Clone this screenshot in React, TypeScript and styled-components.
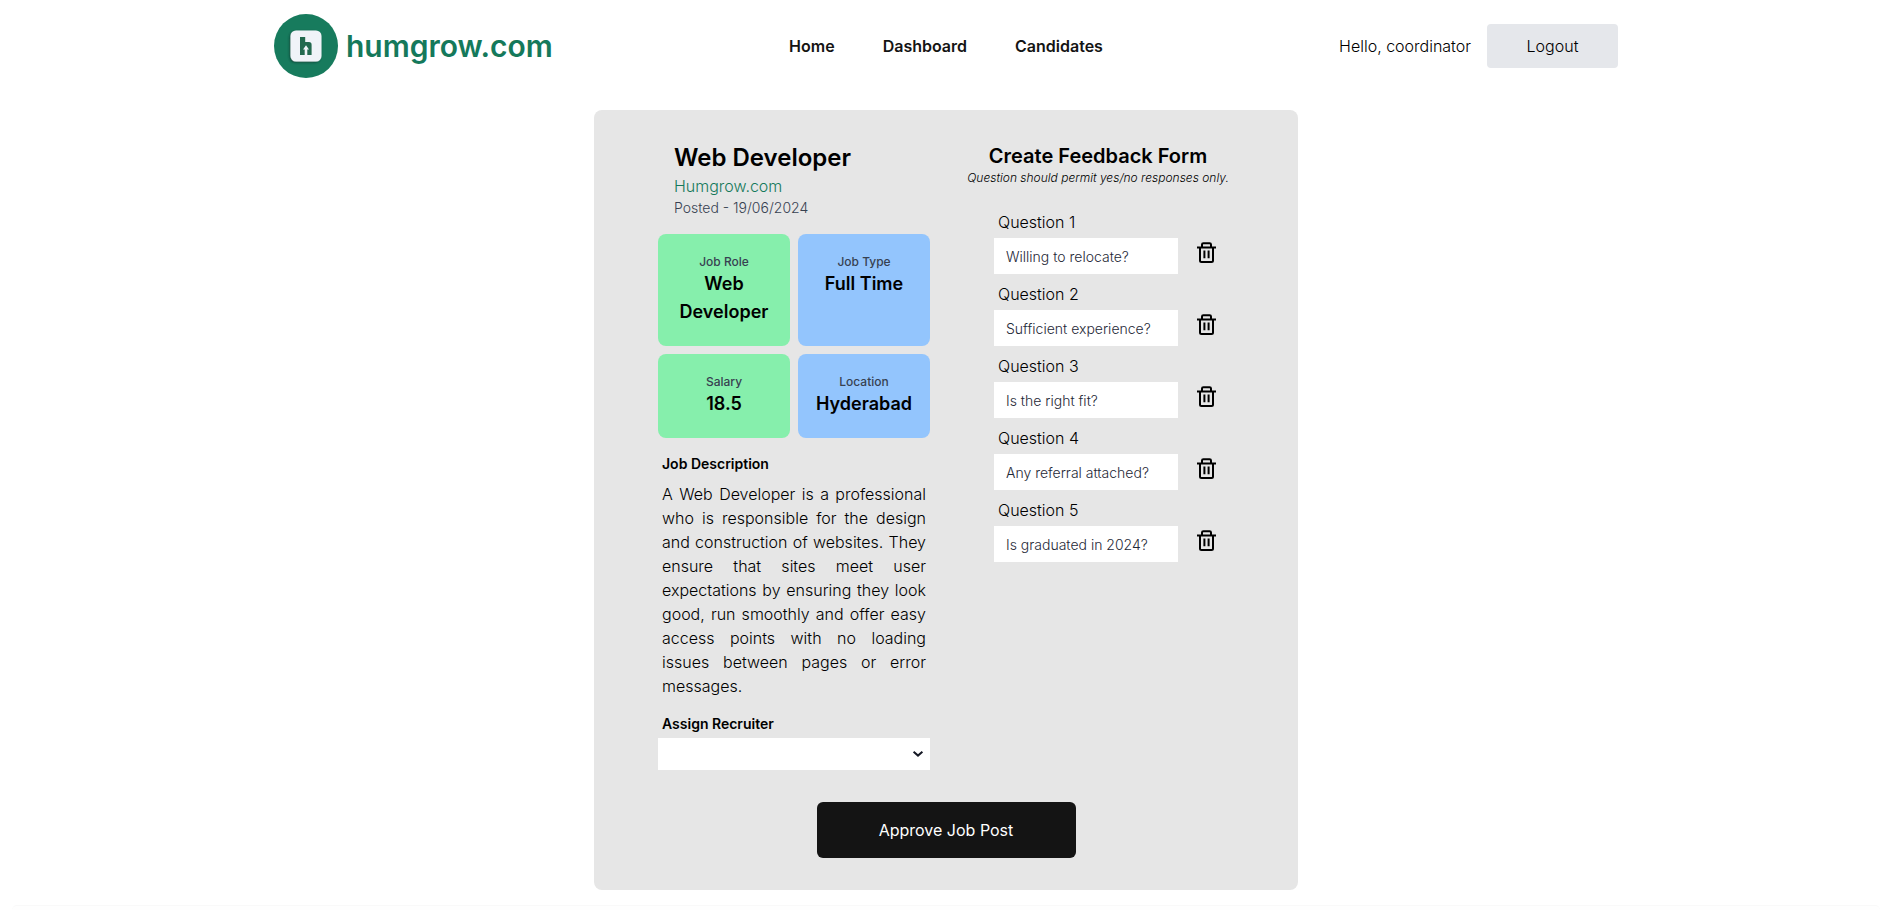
import React, { useState } from 'react';
import styled, { createGlobalStyle } from 'styled-components';

const GlobalStyle = createGlobalStyle`
  *, *::before, *::after {
    box-sizing: border-box;
  }
  body {
    margin: 0;
    background: #ffffff;
    color: #000000;
    font-family: Inter, 'Liberation Sans', sans-serif;
    font-size: 16px;
    font-weight: 300;
    line-height: 24px;
  }
  h1, h2, h3, p, dl, dt, dd {
    margin: 0;
  }
  button, input, select {
    font: inherit;
    color: inherit;
  }
`;

const Page = styled.div`
  padding-left: 6px;
`;

const Header = styled.header`
  display: grid;
  grid-template-columns: 1fr auto 1fr;
  align-items: center;
  max-width: 1344px;
  margin: 0 auto;
  padding: 14px 0;
`;

const Brand = styled.a`
  display: flex;
  align-items: center;
  gap: 8px;
  color: #15795b;
  font-size: 30px;
  font-weight: 600;
  line-height: 36px;
  text-decoration: none;
`;

const Nav = styled.nav`
  display: flex;
  gap: 48px;
`;

const NavLink = styled.a`
  color: #141414;
  font-weight: 600;
  text-decoration: none;
`;

const Account = styled.div`
  display: flex;
  align-items: center;
  justify-content: flex-end;
  gap: 16px;
`;

const LogoutButton = styled.button`
  min-width: 131px;
  padding: 10px 32px;
  border: 0;
  border-radius: 4px;
  background: #e5e7eb;
  cursor: pointer;
`;

const Card = styled.main`
  display: flex;
  flex-direction: column;
  gap: 32px;
  max-width: 704px;
  margin: 18px auto 0;
  padding: 32px 64px;
  border-radius: 8px;
  background: #e6e6e6;
`;

const Columns = styled.div`
  display: grid;
  grid-template-columns: repeat(2, minmax(0, 1fr));
  gap: 32px;
`;

const JobHeading = styled.div`
  padding: 0 16px;
`;

const JobTitle = styled.h1`
  font-size: 24px;
  font-weight: 600;
  line-height: 32px;
`;

const Company = styled.p`
  color: #15795b;
`;

const Posted = styled.p`
  color: #374151;
  font-size: 14px;
  line-height: 20px;
`;

const Facts = styled.dl`
  display: grid;
  grid-template-columns: repeat(2, minmax(0, 1fr));
  gap: 8px;
  margin: 16px 0;
`;

const Fact = styled.div<{ $tone: 'green' | 'blue' }>`
  padding: 20px 16px;
  border-radius: 8px;
  background: ${({ $tone }) => ($tone === 'green' ? '#86efac' : '#93c5fd')};
  text-align: center;
`;

const FactName = styled.dt`
  color: #374151;
  font-size: 12px;
  font-weight: 500;
  line-height: 16px;
`;

const FactValue = styled.dd`
  font-size: 18px;
  font-weight: 600;
  line-height: 28px;
`;

const SectionTitle = styled.h3`
  padding: 0 4px;
  font-size: 14px;
  font-weight: 600;
  line-height: 20px;
`;

const Description = styled.p`
  margin: 8px 0 16px;
  padding: 0 4px;
  text-align: justify;
`;

const RecruiterLabel = styled.label`
  display: block;
  margin-bottom: 4px;
  padding: 0 4px;
  font-size: 14px;
  font-weight: 600;
  line-height: 20px;
`;

const SelectBox = styled.div`
  position: relative;
`;

const Select = styled.select`
  display: block;
  width: 100%;
  height: 32px;
  padding: 0 32px 0 12px;
  border: 0;
  border-radius: 0;
  background: #ffffff;
  appearance: none;
`;

const SelectArrow = styled.svg`
  position: absolute;
  top: 12px;
  right: 6px;
  pointer-events: none;
`;

const FormHeading = styled.div`
  text-align: center;
`;

const FormTitle = styled.h2`
  font-size: 20px;
  font-weight: 600;
  line-height: 28px;
`;

const FormNote = styled.p`
  font-size: 12px;
  font-style: italic;
  line-height: 16px;
`;

const Questions = styled.div`
  display: flex;
  flex-direction: column;
  gap: 8px;
  margin-top: 24px;
  padding: 0 16px 0 32px;
`;

const QuestionLabel = styled.label`
  display: block;
  margin-bottom: 4px;
  padding: 0 4px;
`;

const QuestionRow = styled.div`
  display: flex;
  align-items: flex-start;
  gap: 16px;
`;

const QuestionInput = styled.input`
  flex: 1;
  min-width: 0;
  height: 36px;
  padding: 0 12px;
  border: 0;
  background: #ffffff;
  color: #1f2937;
  font-size: 14px;
`;

const DeleteButton = styled.button`
  display: flex;
  justify-content: center;
  width: 24px;
  padding: 4px 0;
  border: 0;
  background: none;
  cursor: pointer;
`;

const ApproveButton = styled.button`
  align-self: center;
  min-width: 259px;
  padding: 16px 56px;
  border: 0;
  border-radius: 6px;
  background: #141414;
  color: #ffffff;
  font-weight: 400;
  cursor: pointer;
`;

const FooterPanel = styled.footer`
  height: 5px;
  margin: 15px 6px 0;
  border-top: 1px solid #f9f9f9;
  border-radius: 8px 8px 0 0;
  background: #fefefe;
`;

const Logo = () => (
  <svg width="64" height="64" viewBox="0 0 64 64" aria-hidden="true">
    <defs>
      <filter id="tile-shadow" x="-30%" y="-30%" width="160%" height="160%">
        <feDropShadow dx="-1" dy="1" stdDeviation="1" floodColor="#0a3527" floodOpacity="0.7" />
      </filter>
    </defs>
    <circle cx="32" cy="32" r="32" fill="#177b5d" />
    <rect x="16.5" y="16.5" width="31" height="31" rx="5.5" fill="#f0f3f8" filter="url(#tile-shadow)" />
    <path d="M26 23h5.2v5h3.8q2.6 0 2.6 2.8V41H26z" fill="#23694f" />
    <path d="M32 31.2l3 4.2h-1.7V41h-2.6v-5.6H29z" fill="#f0f3f8" />
  </svg>
);

const TrashIcon = () => (
  <svg width="20" height="22" viewBox="0 0 20 22" fill="none" stroke="#000000" strokeWidth="2" aria-hidden="true">
    <path d="M1 5.5h19" />
    <path d="M6 5V2.6Q6 1.2 7.4 1.2h6.2Q15 1.2 15 2.6V5" />
    <path d="M4 5.5V18.6Q4 20.1 5.5 20.1h10Q17 20.1 17 18.6V5.5" />
    <path d="M8.4 8.5v7.8M12.6 8.5v7.8" />
  </svg>
);

const facts: { name: string; value: string; tone: 'green' | 'blue' }[] = [
  { name: 'Job Role', value: 'Web Developer', tone: 'green' },
  { name: 'Job Type', value: 'Full Time', tone: 'blue' },
  { name: 'Salary', value: '18.5', tone: 'green' },
  { name: 'Location', value: 'Hyderabad', tone: 'blue' },
];

const initialQuestions = [
  'Willing to relocate?',
  'Sufficient experience?',
  'Is the right fit?',
  'Any referral attached?',
  'Is graduated in 2024?',
];

export default function App() {
  const [questions, setQuestions] = useState(initialQuestions);

  const updateQuestion = (index: number, text: string) =>
    setQuestions(questions.map((question, i) => (i === index ? text : question)));

  const removeQuestion = (index: number) =>
    setQuestions(questions.filter((_, i) => i !== index));

  return (
    <Page>
      <GlobalStyle />
      <Header>
        <Brand href="#">
          <Logo />
          humgrow.com
        </Brand>
        <Nav>
          <NavLink href="#">Home</NavLink>
          <NavLink href="#">Dashboard</NavLink>
          <NavLink href="#">Candidates</NavLink>
        </Nav>
        <Account>
          <span>Hello, coordinator</span>
          <LogoutButton type="button">Logout</LogoutButton>
        </Account>
      </Header>

      <Card>
        <Columns>
          <section>
            <JobHeading>
              <JobTitle>Web Developer</JobTitle>
              <Company>Humgrow.com</Company>
              <Posted>Posted - 19/06/2024</Posted>
            </JobHeading>
            <Facts>
              {facts.map((fact) => (
                <Fact key={fact.name} $tone={fact.tone}>
                  <FactName>{fact.name}</FactName>
                  <FactValue>{fact.value}</FactValue>
                </Fact>
              ))}
            </Facts>
            <SectionTitle>Job Description</SectionTitle>
            <Description>
              A Web Developer is a professional who is responsible for the design and construction of
              websites. They ensure that sites meet user expectations by ensuring they look good, run
              smoothly and offer easy access points with no loading issues between pages or error
              messages.
            </Description>
            <RecruiterLabel htmlFor="recruiter">Assign Recruiter</RecruiterLabel>
            <SelectBox>
              <Select id="recruiter" defaultValue="">
                <option value="" />
              </Select>
              <SelectArrow width="12" height="8" viewBox="0 0 12 8" fill="none" aria-hidden="true">
                <path d="M1.6 1.8L6 5.6l4.4-3.8" stroke="#141824" strokeWidth="2" />
              </SelectArrow>
            </SelectBox>
          </section>

          <section>
            <FormHeading>
              <FormTitle>Create Feedback Form</FormTitle>
              <FormNote>Question should permit yes/no responses only.</FormNote>
            </FormHeading>
            <Questions>
              {questions.map((question, index) => (
                <div key={index}>
                  <QuestionLabel htmlFor={`question-${index + 1}`}>Question {index + 1}</QuestionLabel>
                  <QuestionRow>
                    <QuestionInput
                      id={`question-${index + 1}`}
                      type="text"
                      value={question}
                      onChange={(event) => updateQuestion(index, event.target.value)}
                    />
                    <DeleteButton
                      type="button"
                      aria-label={`Delete question ${index + 1}`}
                      onClick={() => removeQuestion(index)}
                    >
                      <TrashIcon />
                    </DeleteButton>
                  </QuestionRow>
                </div>
              ))}
            </Questions>
          </section>
        </Columns>
        <ApproveButton type="button">Approve Job Post</ApproveButton>
      </Card>
      <FooterPanel />
    </Page>
  );
}
